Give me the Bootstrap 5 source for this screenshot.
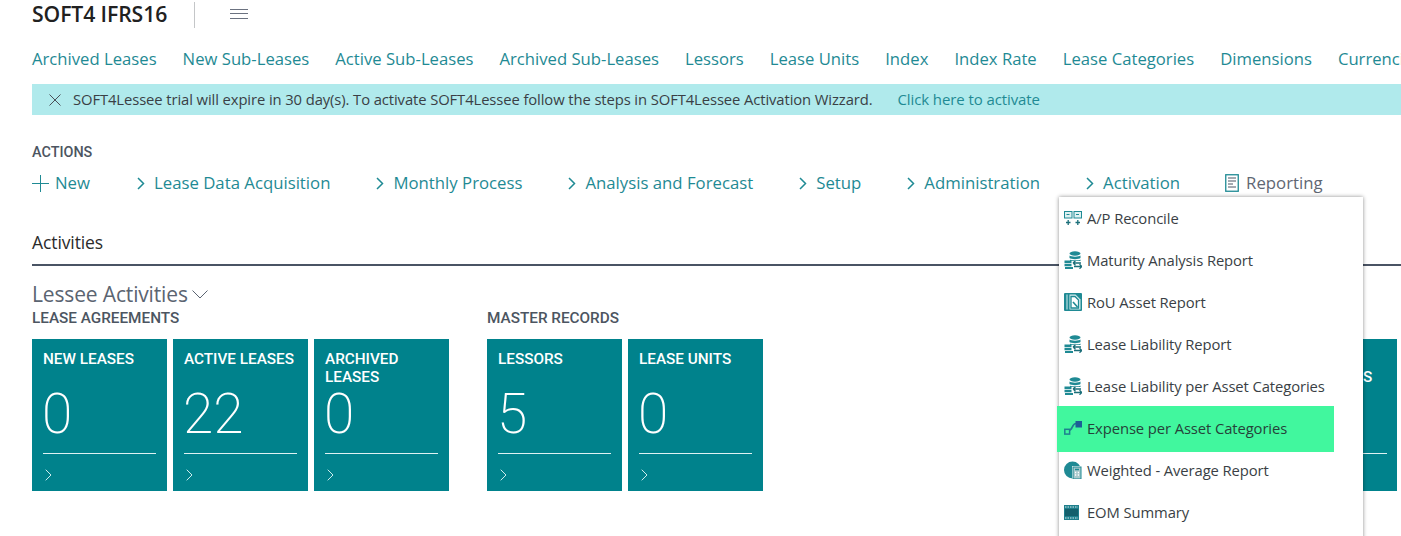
<!DOCTYPE html>
<html lang="en">
<head>
<meta charset="utf-8">
<title>SOFT4 IFRS16</title>
<link href="https://cdn.jsdelivr.net/npm/bootstrap@5.3.0/dist/css/bootstrap.min.css" rel="stylesheet">
<style>
html,body{height:536px;overflow:hidden;background:#fff}
body{font-family:"Open Sans","Noto Sans",sans-serif;color:#333;position:relative;font-size:15px}
.din{font-family:Roboto,"Liberation Sans",sans-serif}
.topbar{height:30px;padding-left:32px}
.apptitle{font-size:21.2px;font-weight:600;color:#212121;line-height:30px;margin:-2px 0 0;letter-spacing:-.1px}
.vsep{width:1px;height:26px;background:#c4c6c8;margin:0 35px 0 27px}
.burger{width:18px;height:10px;border-top:1px solid #6b7280;border-bottom:1px solid #6b7280;position:relative;margin-top:-2px}
.burger::after{content:"";position:absolute;left:0;right:0;top:3px;border-top:1px solid #6b7280}
.navline{margin:18px 0 0 32px;height:22px;white-space:nowrap;gap:26px;flex-wrap:nowrap;line-height:22px}
.navline a{color:#1f8a94;text-decoration:none;font-size:16.68px}
.actline a{color:#1f8a94;text-decoration:none;font-size:16.75px}
.banner{margin:14px 0 0 32px;height:31px;background:#b0eaec;padding-left:17px;color:#3a3f45;font-size:14.8px;letter-spacing:-.1px;white-space:nowrap}
.banner a{color:#1f8a94;text-decoration:none;margin-left:25px;font-size:15px}
.banner svg{margin-right:12px}
.lbl{font-size:15.3px;font-weight:500;color:#4c5561;line-height:18px;margin-top:1px}
.actlabel{margin:29px 0 0 32px;font-size:14.4px}
.actline{margin:10px 0 0 32px;height:22px;line-height:22px;white-space:nowrap}
.actline a{display:flex;align-items:center;margin-right:45px}
.actline a:first-child{margin-right:46px}
.actline svg{flex:none}
.chev{margin:0 9px 0 1px}
.actline .grey{color:#5f6773}
.acthead{margin:36px 0 0 32px;font-size:17.5px;line-height:24px;color:#2b2b2b;letter-spacing:-.1px;padding-bottom:10px;border-bottom:2px solid #4a5464}
.leshead{margin:14px 0 0 32px;font-size:21px;line-height:28px;color:#5b6471;display:flex;align-items:center;gap:4px;letter-spacing:-.15px}
.tilewrap{margin:0 4px 0 32px;gap:38px}
.tilegroup{gap:6px}
.lastgroup{margin-left:auto}
.tilecard{width:135px;height:152px;background:#00828c;color:#fff;border:0;border-radius:0;padding:11px 11px 0;margin-top:12px;flex:none}
.tiletitle{font-size:15.3px;line-height:18px;font-weight:500;height:36px;color:#fff}
.tilenum{font-size:55px;line-height:62px;font-weight:200;height:62px;margin-top:-3px;margin-left:-1px}
.tileline{border-top:1px solid #dff2f3;margin-top:8px;padding:9px 0 0 2px}
.tilecard.cliptile{width:35px;padding:11px 10px 0 1px}
.tilemenu{left:1059px;top:197px;width:304px;height:345px;padding:0;margin:0;border:0;border-radius:0;background:#fff;box-shadow:0 0 4px rgba(0,0,0,.45);display:block}
.tilemenu .dropdown-item{height:42px;display:flex;align-items:center;padding:0 0 0 5px;gap:5px;color:#3a3f45;font-size:14.8px;letter-spacing:-.1px;position:relative}
.tilemenu .dropdown-item svg{flex:none}
.tilemenu .hlitem{background:#41f79e;margin-left:-2px;padding:0 0 2px 7px;width:277px;height:46px;margin-top:-1px;margin-bottom:-3px;color:#26423a}
</style>
</head>
<body>
<div class="d-flex align-items-center topbar">
  <h1 class="apptitle">SOFT4 IFRS16</h1>
  <div class="vsep"></div>
  <div class="burger"></div>
</div>

<nav class="nav navline">
  <a href="#">Archived Leases</a><a href="#">New Sub-Leases</a><a href="#">Active Sub-Leases</a><a href="#">Archived Sub-Leases</a><a href="#">Lessors</a><a href="#">Lease Units</a><a href="#">Index</a><a href="#">Index Rate</a><a href="#">Lease Categories</a><a href="#">Dimensions</a><a href="#">Currencies</a>
</nav>

<div class="d-flex align-items-center banner">
  <svg width="12" height="12" viewBox="0 0 12 12"><path d="M.5.5l11 11M11.500.5l-11 11" stroke="#4a5058" fill="none"/></svg>
  <span>SOFT4Lessee trial will expire in 30 day(s). To activate SOFT4Lessee follow the steps in SOFT4Lessee Activation Wizzard.</span>
  <a href="#">Click here to activate</a>
</div>

<div class="din lbl actlabel">ACTIONS</div>
<div class="d-flex actline">
  <a href="#"><svg width="17" height="17" viewBox="0 0 17 17" style="margin-right:6px"><path d="M8.500 0v17M0 8.500h17" stroke="#1f8a94" fill="none"/></svg>New</a>
  <a href="#"><svg class="chev" width="8" height="13" viewBox="0 0 8 13"><path d="M1 1l5.500 5.500L1 12" stroke="#1f8a94" stroke-width="1.500" fill="none"/></svg>Lease Data Acquisition</a>
  <a href="#"><svg class="chev" width="8" height="13" viewBox="0 0 8 13"><path d="M1 1l5.500 5.500L1 12" stroke="#1f8a94" stroke-width="1.500" fill="none"/></svg>Monthly Process</a>
  <a href="#"><svg class="chev" width="8" height="13" viewBox="0 0 8 13"><path d="M1 1l5.500 5.500L1 12" stroke="#1f8a94" stroke-width="1.500" fill="none"/></svg>Analysis and Forecast</a>
  <a href="#"><svg class="chev" width="8" height="13" viewBox="0 0 8 13"><path d="M1 1l5.500 5.500L1 12" stroke="#1f8a94" stroke-width="1.500" fill="none"/></svg>Setup</a>
  <a href="#"><svg class="chev" width="8" height="13" viewBox="0 0 8 13"><path d="M1 1l5.500 5.500L1 12" stroke="#1f8a94" stroke-width="1.500" fill="none"/></svg>Administration</a>
  <a href="#"><svg class="chev" width="8" height="13" viewBox="0 0 8 13"><path d="M1 1l5.500 5.500L1 12" stroke="#1f8a94" stroke-width="1.500" fill="none"/></svg>Activation</a>
  <a href="#" class="grey"><svg width="14" height="18" viewBox="0 0 14 18" style="margin-right:7px"><rect x=".75" y=".75" width="12.500" height="16.500" fill="none" stroke="#1f8a94" stroke-width="1.300"/><path d="M3 4h8M3 7h8M3 10h5M3 13h8" stroke="#4a5464" fill="none"/></svg>Reporting</a>
</div>

<div class="acthead">Activities</div>
<div class="leshead"><span>Lessee Activities</span><svg width="16" height="9" viewBox="0 0 16 9"><path d="M.5.5L8 8l7.500-7.500" stroke="#5b6471" fill="none"/></svg></div>

<div class="din d-flex tilewrap">
  <section>
    <div class="lbl">LEASE AGREEMENTS</div>
    <div class="d-flex tilegroup">
      <div class="card tilecard"><div class="tiletitle">NEW LEASES</div><div class="tilenum">0</div><div class="tileline"><svg width="7" height="12" viewBox="0 0 7 12"><path d="M.7.7L6 6 .7 11.300" stroke="#cdeced" fill="none"/></svg></div></div>
      <div class="card tilecard"><div class="tiletitle">ACTIVE LEASES</div><div class="tilenum">22</div><div class="tileline"><svg width="7" height="12" viewBox="0 0 7 12"><path d="M.7.7L6 6 .7 11.300" stroke="#cdeced" fill="none"/></svg></div></div>
      <div class="card tilecard"><div class="tiletitle">ARCHIVED LEASES</div><div class="tilenum">0</div><div class="tileline"><svg width="7" height="12" viewBox="0 0 7 12"><path d="M.7.7L6 6 .7 11.300" stroke="#cdeced" fill="none"/></svg></div></div>
    </div>
  </section>
  <section>
    <div class="lbl">MASTER RECORDS</div>
    <div class="d-flex tilegroup">
      <div class="card tilecard"><div class="tiletitle">LESSORS</div><div class="tilenum">5</div><div class="tileline"><svg width="7" height="12" viewBox="0 0 7 12"><path d="M.7.7L6 6 .7 11.300" stroke="#cdeced" fill="none"/></svg></div></div>
      <div class="card tilecard"><div class="tiletitle">LEASE UNITS</div><div class="tilenum">0</div><div class="tileline"><svg width="7" height="12" viewBox="0 0 7 12"><path d="M.7.7L6 6 .7 11.300" stroke="#cdeced" fill="none"/></svg></div></div>
    </div>
  </section>
  <section class="lastgroup">
    <div class="lbl">&nbsp;</div>
    <div class="d-flex tilegroup">
      <div class="card tilecard cliptile"><div class="tiletitle">&nbsp;<br>S</div><div class="tilenum">&nbsp;</div><div class="tileline"></div></div>
    </div>
  </section>
</div>

<svg width="0" height="0" class="d-block position-absolute">
  <defs>
    <g id="stackicon">
      <ellipse cx="11" cy="2.500" rx="5.500" ry="2.200" fill="#1f8a94"/>
      <path d="M5.500 4.500c1 1.500 10 1.500 11 0v2.500c-1 1.500-10 1.500-11 0z" fill="#1f8a94"/>
      <path d="M6 8.500c1 1.200 9.500 1.200 10.500 0v1.500H6z" fill="#1f8a94"/>
      <path d="M.5 9.500h7v2.400h-7zM.5 12.800h7v2.400h-7zM1 16h8v2H1z" fill="#1f8a94"/>
      <path d="M9 12h8M9 12l2.500-2.200M9 12l2.500 2.200M10 15.500h7.500M18 15.500l-2.500-2.200M18 15.500l-2.500 2.200" stroke="#1c6f7a" stroke-width="1.300" fill="none"/>
    </g>
  </defs>
</svg>

<ul class="dropdown-menu show position-absolute tilemenu list-unstyled">
  <li><a class="dropdown-item" href="#"><svg width="18" height="15" viewBox="0 0 18 15"><rect x=".5" y=".5" width="7.500" height="6.500" fill="#dff1f2" stroke="#1f8a94"/><rect x="10" y=".5" width="7.500" height="6.500" fill="#dff1f2" stroke="#1f8a94"/><path d="M2.500 3.500h3M12 3.500h3" stroke="#1f8a94" fill="none"/><path d="M4.200 9v5M2 11.500h4.500M13.800 9v5M11.500 11.500h4.500" stroke="#1c6f7a" stroke-width="1.300" fill="none"/></svg>A/P Reconcile</a></li>
  <li><a class="dropdown-item" href="#"><svg width="18" height="18" viewBox="0 0 18 18"><use href="#stackicon"/></svg>Maturity Analysis Report</a></li>
  <li><a class="dropdown-item" href="#"><svg width="18" height="18" viewBox="0 0 18 18"><rect width="18" height="18" rx="1" fill="#1f8a94"/><path d="M3 1.500v15" stroke="#d8eef0" fill="none"/><path d="M5.500 1.500h6l5 5v10h-11z" fill="#d8eef0"/><path d="M7 3.500h4l3.500 3.500v8H7z" fill="#fff" stroke="#1f8a94" stroke-width="1.300"/><path d="M9 9l4.500 5" stroke="#1f8a94" stroke-width="1.600" fill="none"/></svg>RoU Asset Report</a></li>
  <li><a class="dropdown-item" href="#"><svg width="18" height="18" viewBox="0 0 18 18"><use href="#stackicon"/></svg>Lease Liability Report</a></li>
  <li><a class="dropdown-item" href="#"><svg width="18" height="18" viewBox="0 0 18 18"><use href="#stackicon"/></svg>Lease Liability per Asset Categories</a></li>
  <li><a class="dropdown-item hlitem" href="#"><svg width="18" height="14" viewBox="0 0 18 14"><rect x=".8" y="8.300" width="4.800" height="4.800" fill="none" stroke="#1f7f8f" stroke-width="1.500"/><path d="M5 9.500c3.500 0 3-7 7-7" stroke="#1f7f8f" stroke-width="1.700" fill="none"/><rect x="11.500" y="0" width="6.500" height="6.500" fill="#1c5f96"/></svg>Expense per Asset Categories</a></li>
  <li><a class="dropdown-item" href="#"><svg width="18" height="18" viewBox="0 0 18 18"><circle cx="8.500" cy="9" r="8.500" fill="#1f8a94"/><rect x="8" y="5" width="10" height="13" fill="#fff"/><rect x="9" y="6" width="8" height="12" fill="#a9c9cc" stroke="#1f8a94"/><path d="M11 8.500h4" stroke="#1f8a94" stroke-width="1.500"/><path d="M11 11.500h1.200M13.800 11.500h1.200M11 14h1.200M13.800 14h1.200" stroke="#fff" stroke-width="1.500"/></svg>Weighted - Average Report</a></li>
  <li><a class="dropdown-item" href="#"><svg width="16" height="15" viewBox="0 0 16 15" style="margin-right:2px"><rect width="15" height="15" fill="#1f7f8c"/><path d="M1 2h13M1 13h13" stroke="#d8eef0" stroke-width="1.200" stroke-dasharray="1.500 1" fill="none"/><rect x="1" y="4" width="13" height="7" fill="#14606c"/></svg>EOM Summary</a></li>
</ul>
</body>
</html>
